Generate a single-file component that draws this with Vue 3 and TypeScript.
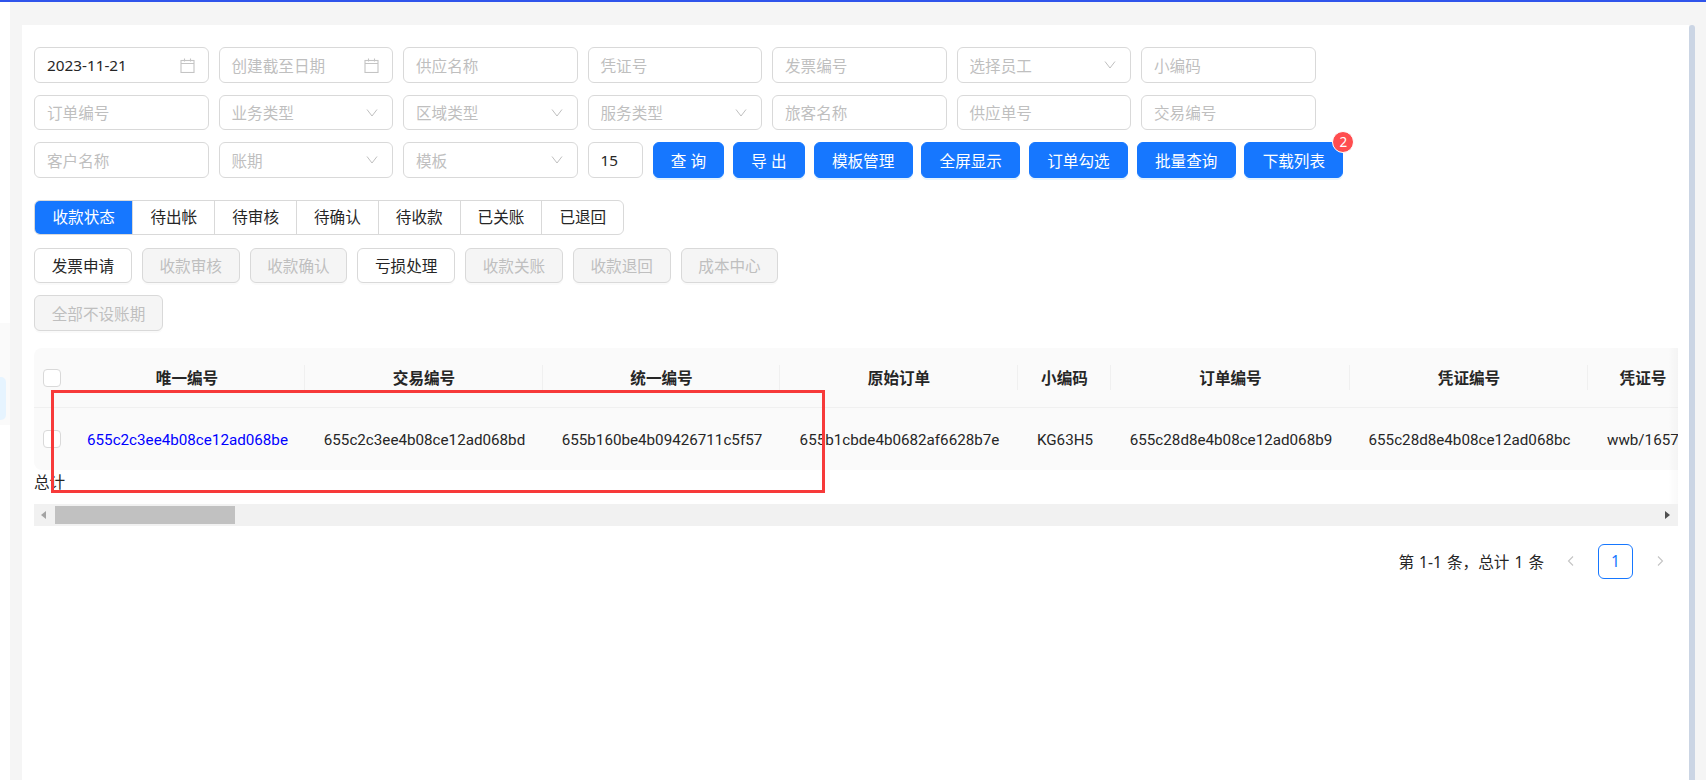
<script setup lang="ts">
interface Field {
  label: string
  kind?: 'date' | 'select'
  value?: string
}

const filterRows: Field[][] = [
  [
    { label: '', kind: 'date', value: '2023-11-21' },
    { label: '创建截至日期', kind: 'date' },
    { label: '供应名称' },
    { label: '凭证号' },
    { label: '发票编号' },
    { label: '选择员工', kind: 'select' },
    { label: '小编码' },
  ],
  [
    { label: '订单编号' },
    { label: '业务类型', kind: 'select' },
    { label: '区域类型', kind: 'select' },
    { label: '服务类型', kind: 'select' },
    { label: '旅客名称' },
    { label: '供应单号' },
    { label: '交易编号' },
  ],
  [
    { label: '客户名称' },
    { label: '账期', kind: 'select' },
    { label: '模板', kind: 'select' },
  ],
]

const searchButtons = ['查 询', '导 出', '模板管理', '全屏显示', '订单勾选', '批量查询', '下载列表']
const statusTabs = ['收款状态', '待出帐', '待审核', '待确认', '待收款', '已关账', '已退回']
const actions = [
  { label: '发票申请', off: false },
  { label: '收款审核', off: true },
  { label: '收款确认', off: true },
  { label: '亏损处理', off: false },
  { label: '收款关账', off: true },
  { label: '收款退回', off: true },
  { label: '成本中心', off: true },
]

const columns = [
  { title: '唯一编号', width: 236, text: '655c2c3ee4b08ce12ad068be', link: true },
  { title: '交易编号', width: 238, text: '655c2c3ee4b08ce12ad068bd' },
  { title: '统一编号', width: 237, text: '655b160be4b09426711c5f57' },
  { title: '原始订单', width: 238, text: '655b1cbde4b0682af6628b7e' },
  { title: '小编码', width: 93, text: 'KG63H5' },
  { title: '订单编号', width: 239, text: '655c28d8e4b08ce12ad068b9' },
  { title: '凭证编号', width: 238, text: '655c28d8e4b08ce12ad068bc' },
  { title: '凭证号', width: 110, text: 'wwb/1657', clip: true },
]
</script>

<template>
  <div class="page">
    <div class="side">
      <div class="side-gray"><span class="side-active" /></div>
    </div>

    <main class="card">
      <div v-for="(row, r) in filterRows" :key="r" class="filter-row">
        <div v-for="f in row" :key="f.label || f.value" class="field">
          <span :class="f.value ? 'val' : 'ph'">{{ f.value || f.label }}</span>
          <svg v-if="f.kind === 'date'" class="ico" width="15" height="15" viewBox="0 0 15 15" fill="none" stroke="#c4c4c4" stroke-width="1.1">
            <rect x="1" y="2.5" width="13" height="12" />
            <path d="M1 5.500h13M4.500 0.500v3M10.500 0.500v3" />
          </svg>
          <svg v-if="f.kind === 'select'" class="ico chev" width="12" height="12" viewBox="0 0 12 12" fill="none" stroke="#bfbfbf" stroke-width="1">
            <path d="M1 2.500l5 6.500 5-6.500" />
          </svg>
        </div>
        <template v-if="r === 2">
          <div class="field num"><span class="val">15</span></div>
          <button v-for="b in searchButtons" :key="b" class="btn primary">
            {{ b }}
            <span v-if="b === '下载列表'" class="badge">2</span>
          </button>
        </template>
      </div>

      <div class="tabs">
        <div v-for="(t, i) in statusTabs" :key="t" class="tab" :class="{ active: i === 0 }">{{ t }}</div>
      </div>

      <div class="actions first">
        <button v-for="a in actions" :key="a.label" class="btn" :class="{ off: a.off }">{{ a.label }}</button>
      </div>
      <div class="actions">
        <button class="btn off">全部不设账期</button>
      </div>

      <div class="table-area">
        <div class="table-wrap">
          <div class="thead">
            <div class="cell check"><span class="box" /></div>
            <div
              v-for="c in columns"
              :key="c.title"
              class="cell th"
              :style="{ width: c.width + 'px' }"
            >{{ c.title }}</div>
          </div>
          <div class="tbody">
            <div class="cell check"><span class="box" /></div>
            <div
              v-for="c in columns"
              :key="c.title"
              class="cell td"
              :class="{ link: c.link, clip: c.clip }"
              :style="{ width: c.width + 'px' }"
            >{{ c.text }}</div>
          </div>
        </div>
        <div class="total">总计</div>
        <span class="ping-shadow" />
      </div>

      <div class="hscroll">
        <span class="arrow left" />
        <span class="thumb" />
        <span class="arrow right" />
      </div>

      <div class="pager">
        <span class="pager-text">第 1-1 条，总计 1 条</span>
        <svg width="12" height="12" viewBox="0 0 12 12" fill="none" stroke="#c4c4c4" stroke-width="1.1"><path d="M8 1.500L3.500 6 8 10.500" /></svg>
        <span class="page-no">1</span>
        <svg width="12" height="12" viewBox="0 0 12 12" fill="none" stroke="#c4c4c4" stroke-width="1.1"><path d="M4 1.500L8.500 6 4 10.500" /></svg>
      </div>

      <div class="red-mark" />
    </main>

    <span class="vthumb" />
  </div>
</template>

<style scoped>
.page {
  display: flex;
  align-items: flex-start;
  height: 780px;
  overflow: hidden;
  background: #f5f5f5;
  border-top: 2px solid #2f54eb;
  box-sizing: border-box;
  font-family: "Noto Sans", "Noto Sans CJK SC", sans-serif;
  font-size: 15.6px;
  color: #262626;
}

.side {
  width: 10px;
  height: 100%;
  flex-shrink: 0;
  background: #fff;
  padding-top: 321px;
  box-sizing: border-box;
}

.side-gray {
  height: 102px;
  background: #fafafa;
  padding-top: 54px;
  box-sizing: border-box;
}

.side-active {
  display: block;
  width: 6px;
  height: 43px;
  background: #e6f4ff;
  border-radius: 0 5px 5px 0;
}

.card {
  position: relative;
  width: 1667px;
  height: 755px;
  margin: 23px 0 0 12px;
  padding: 22.3px 0 0 12px;
  box-sizing: border-box;
  background: #fff;
  overflow: hidden;
}

.filter-row {
  display: flex;
  gap: 10px;
  margin-bottom: 12px;
}

.field {
  display: flex;
  align-items: center;
  justify-content: space-between;
  width: 174.5px;
  height: 35.5px;
  padding: 0 13px 0 12px;
  box-sizing: border-box;
  border: 1px solid #d9d9d9;
  border-radius: 6px;
  background: #fff;
}

.field.num {
  width: 55px;
}

.val {
  color: #262626;
  font-size: 15.3px;
}

.ph {
  color: #bfbfbf;
}

.ico {
  flex-shrink: 0;
}

.chev {
  margin-right: 1px;
}

.btn {
  position: relative;
  height: 35.5px;
  padding: 0 16.7px;
  border: 1px solid #d9d9d9;
  border-radius: 6px;
  background: #fff;
  color: #262626;
  font: inherit;
  white-space: nowrap;
  box-shadow: 0 2px 0 rgba(0, 0, 0, 0.02);
}

.btn.primary {
  margin-right: -1.3px;
  padding: 0 17.3px;
  border-color: #1677ff;
  background: #1677ff;
  color: #fff;
  box-shadow: 0 2px 0 rgba(5, 145, 255, 0.1);
}

.btn.off {
  background: #f5f5f5;
  color: #bfbfbf;
}

.badge {
  position: absolute;
  top: -12px;
  right: -12px;
  width: 22px;
  height: 22px;
  border-radius: 50%;
  border: 1px solid #fff;
  box-sizing: border-box;
  background: #ff4d4f;
  color: #fff;
  font-size: 13.5px;
  line-height: 20px;
  text-align: center;
}

.tabs {
  display: flex;
  margin-top: 22px;
  width: max-content;
  border: 1px solid #d9d9d9;
  border-radius: 6px;
  overflow: hidden;
}

.tab {
  height: 33.5px;
  line-height: 33.5px;
  padding: 0 17px;
  border-left: 1px solid #d9d9d9;
}

.tab.active {
  border-left: none;
  padding: 0 17.5px;
  background: #1677ff;
  color: #fff;
}

.actions {
  display: flex;
  gap: 10px;
  margin-top: 12px;
}

.actions.first {
  margin-top: 12.5px;
}

.table-area {
  position: relative;
  width: 1644px;
  margin-top: 17px;
}

.table-wrap {
  overflow: hidden;
}

/* 表格横向滚动时右侧的阴影 */
.ping-shadow {
  position: absolute;
  top: 0;
  right: 0;
  bottom: 0;
  width: 10px;
  background: linear-gradient(to right, rgba(0, 0, 0, 0), rgba(0, 0, 0, 0.025));
}

.thead,
.tbody {
  display: flex;
  width: max-content;
  background: #fafafa;
}

.thead {
  height: 60.5px;
  border-bottom: 1px solid #f0f0f0;
  border-top-left-radius: 8px;
  box-sizing: border-box;
}

.tbody {
  height: 62px;
  border-bottom-left-radius: 8px;
}

.cell {
  display: flex;
  align-items: center;
  justify-content: center;
  flex-shrink: 0;
  box-sizing: border-box;
  white-space: nowrap;
}

.check {
  width: 35px;
}

.th {
  position: relative;
  font-weight: 700;
  color: #262626;
}

.th:not(:last-child)::after {
  content: "";
  position: absolute;
  right: 0;
  top: 17px;
  height: 25px;
  width: 1px;
  background: #f0f0f0;
}

.td {
  padding-top: 1px;
  padding-left: 1px;
  font-family: Roboto, "Noto Sans CJK SC", sans-serif;
  font-size: 15.2px;
}

.td.link {
  color: #0000ff;
}

.td.clip {
  justify-content: flex-start;
  padding-left: 19px;
}

.box {
  width: 18px;
  height: 18px;
  box-sizing: border-box;
  border: 1px solid #d9d9d9;
  border-radius: 4px;
  background: #fff;
}

.total {
  height: 33.5px;
  line-height: 25px;
  color: #262626;
}

.hscroll {
  display: flex;
  align-items: center;
  width: 1644px;
  height: 22px;
  background: #f1f1f1;
}

.arrow {
  width: 0;
  height: 0;
  border-top: 4.5px solid transparent;
  border-bottom: 4.5px solid transparent;
}

.arrow.left {
  margin-left: 7px;
  border-right: 5px solid #a3a3a3;
}

.thumb {
  width: 180px;
  height: 18px;
  margin-left: 9px;
  background: #c1c1c1;
}

.arrow.right {
  margin-left: auto;
  margin-right: 8px;
  border-left: 5px solid #505050;
}

.pager {
  display: flex;
  align-items: center;
  justify-content: flex-end;
  width: 1644px;
  height: 35px;
  margin-top: 18px;
  padding-right: 12px;
  box-sizing: border-box;
}

.pager-text {
  margin-right: 21px;
  word-spacing: 1px;
}

.page-no {
  width: 35px;
  height: 35px;
  margin: 0 21px;
  box-sizing: border-box;
  border: 1px solid #1677ff;
  border-radius: 6px;
  color: #1677ff;
  line-height: 33px;
  text-align: center;
}

/* 截图上手工标注的红框 */
.red-mark {
  position: absolute;
  left: 29px;
  top: 365px;
  width: 774px;
  height: 103px;
  box-sizing: border-box;
  border: 3px solid #f73a3a;
  pointer-events: none;
}

.vthumb {
  width: 6px;
  height: 755px;
  flex-shrink: 0;
  margin-top: 23px;
  border-radius: 3px 3px 0 0;
  background: #cbd5e4;
}
</style>

<style>
html, body {
  margin: 0;
  background: #fff;
}
</style>
